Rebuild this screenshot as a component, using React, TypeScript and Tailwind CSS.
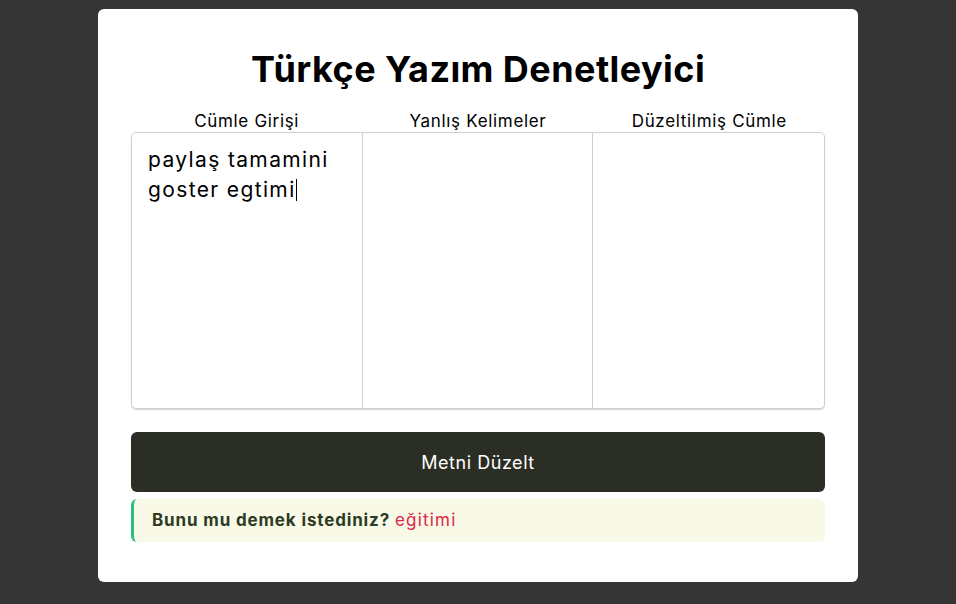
import React from 'react';

const font = { fontFamily: 'Inter, "Noto Sans", sans-serif' };

const App: React.FC = () => {
  return (
    <div className="min-h-screen w-full bg-[#353535] pt-[9px]" style={font}>
      <div className="mx-auto w-[760px] rounded-md bg-white px-[33px] pt-[38px] pb-[40px]">
        <h1 className="text-center text-[36px] font-bold leading-[44px] tracking-[0.012em] text-black">
          Türkçe Yazım Denetleyici
        </h1>

        <div className="mt-[20px] grid grid-cols-3 text-center text-[17px] leading-[20px] tracking-[0.04em] text-black">
          <span>Cümle Girişi</span>
          <span>Yanlış Kelimeler</span>
          <span>Düzeltilmiş Cümle</span>
        </div>

        <div className="mt-[1px] grid h-[277px] grid-cols-3 rounded-[5px] border border-[#cfcfcf] shadow-[0_1px_1px_rgba(0,0,0,0.18)]">
          <div className="border-r border-[#cfcfcf] px-4 pt-[12px] text-[21px] leading-[30px] tracking-[0.065em] text-black">
            paylaş tamamini
            <br />
            goster egtimi<span className="inline-block h-[22px] w-px translate-y-[4px] bg-black align-baseline" />
          </div>
          <div className="border-r border-[#cfcfcf]" />
          <div />
        </div>

        <button className="mt-[23px] flex h-[60px] w-full items-center justify-center rounded-md bg-[#2a2e25] text-[18px] tracking-[0.03em] text-white">
          Metni Düzelt
        </button>

        <div className="mt-[7px] flex h-[43px] items-center rounded-md border-l-[3px] border-[#2bbf7f] bg-[#f8f9e6] pl-[18px] text-[17px] tracking-[0.05em]">
          <span className="font-bold text-[#2d3b24]">Bunu mu demek istediniz?</span>
          <span className="ml-[5px] tracking-[0.07em] text-[#dc2747]">eğitimi</span>
        </div>
      </div>
    </div>
  );
};

export default App;
